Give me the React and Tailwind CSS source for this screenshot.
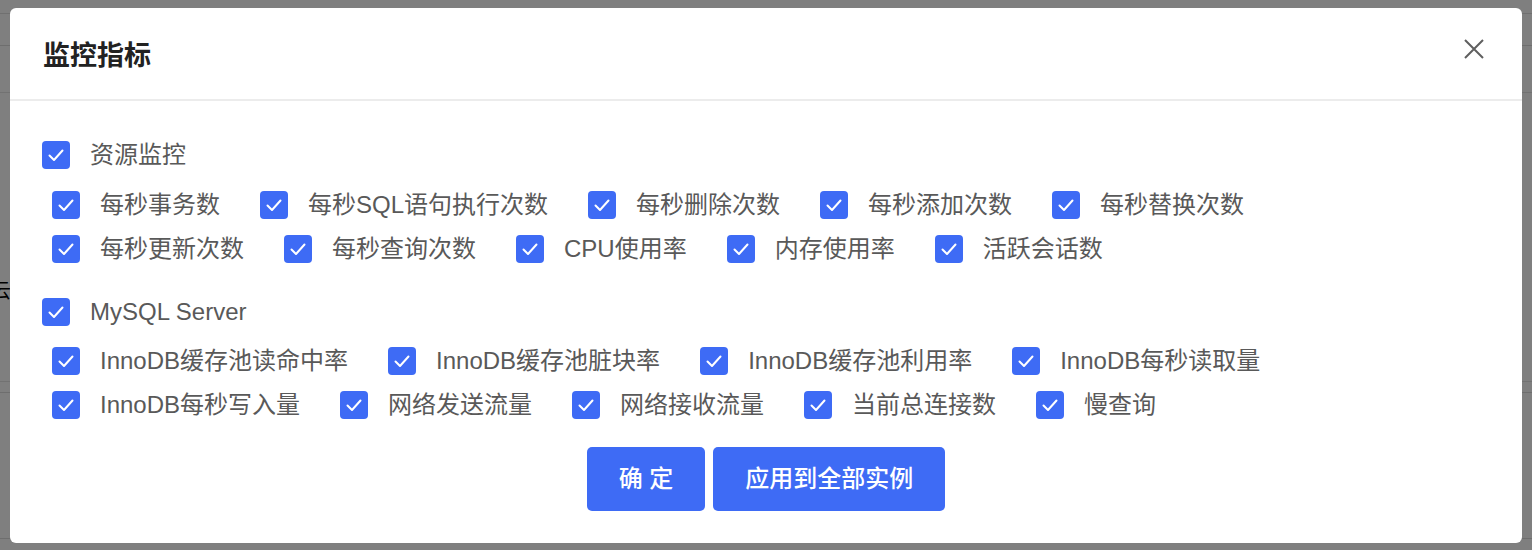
import React from "react";

const FONT = { fontFamily: '"Liberation Sans", "Noto Sans CJK SC", sans-serif' };

function Box() {
  return (
    <span className="flex h-[28px] w-[28px] shrink-0 items-center justify-center rounded-[4px] bg-[#3e6bf5]">
      <svg width="28" height="28" viewBox="0 0 28 28" fill="none">
        <path d="M7.5 14.5 L12 19 L20.5 9.5" stroke="#fff" strokeWidth="2" strokeLinecap="round" strokeLinejoin="round" />
      </svg>
    </span>
  );
}

function Item({ label }) {
  return (
    <label className="flex h-[28px] items-center gap-[20px]">
      <Box />
      <span className="whitespace-nowrap text-[24px] leading-[28px] text-[#595959]">{label}</span>
    </label>
  );
}

function Row({ items }) {
  return (
    <div className="flex gap-x-[40px] pl-[10px]">
      {items.map((t) => (
        <Item key={t} label={t} />
      ))}
    </div>
  );
}

export default function App() {
  return (
    <div className="relative h-[550px] w-[1532px] overflow-hidden bg-white" style={FONT}>
      {/* underlying page hints */}
      <div className="absolute left-0 top-[13px] h-[1px] w-full bg-[#e0e0e0]" />
      <div className="absolute left-0 top-[45px] h-[1px] w-full bg-[#dcdcdc]" />
      <div className="absolute left-0 top-[92px] h-[1px] w-full bg-[#e4e4e4]" />
      <div className="absolute left-0 top-[381px] h-[1px] w-full bg-[#e4e4e4]" />
      <div className="absolute left-0 top-[392px] h-[1px] w-full bg-[#dcdcdc]" />
      <div className="absolute left-0 top-[538px] h-[1px] w-full bg-[#dcdcdc]" />
      <div className="absolute left-[-9px] top-[279px] text-[20px] leading-[24px] text-black">云</div>

      {/* overlay */}
      <div className="absolute inset-0 bg-black/50" />

      {/* dialog */}
      <div className="absolute left-[10px] top-[8px] flex h-[535px] w-[1512px] flex-col rounded-[6px] bg-white">
        <div className="flex h-[93px] shrink-0 items-center justify-between border-b-2 border-[#ececec] pl-[33px] pr-[38px]">
          <h2 className="pt-[5px] text-[27px] font-bold leading-none text-[#222222]">监控指标</h2>
          <svg width="20" height="20" viewBox="0 0 20 20" fill="none" className="mt-[-10px]">
            <path d="M1 1 L19 19 M19 1 L1 19" stroke="#5f5f5f" strokeWidth="2" />
          </svg>
        </div>

        <div className="flex flex-col pl-[32px] pt-[40px]">
          <Item label="资源监控" />
          <div className="mt-[22px] flex flex-col gap-y-[16px]">
            <Row items={["每秒事务数", "每秒SQL语句执行次数", "每秒删除次数", "每秒添加次数", "每秒替换次数"]} />
            <Row items={["每秒更新次数", "每秒查询次数", "CPU使用率", "内存使用率", "活跃会话数"]} />
          </div>

          <div className="mt-[35px]">
            <Item label="MySQL Server" />
          </div>
          <div className="mt-[21px] flex flex-col gap-y-[16px]">
            <Row items={["InnoDB缓存池读命中率", "InnoDB缓存池脏块率", "InnoDB缓存池利用率", "InnoDB每秒读取量"]} />
            <Row items={["InnoDB每秒写入量", "网络发送流量", "网络接收流量", "当前总连接数", "慢查询"]} />
          </div>
        </div>

        <div className="mt-[28px] flex justify-center gap-[8px]">
          <button className="h-[64px] rounded-[5px] bg-[#3e6bf5] px-[32px] text-[24px] font-medium text-white">确 定</button>
          <button className="h-[64px] rounded-[5px] bg-[#3e6bf5] px-[32px] text-[24px] font-medium text-white">应用到全部实例</button>
        </div>
      </div>
    </div>
  );
}
